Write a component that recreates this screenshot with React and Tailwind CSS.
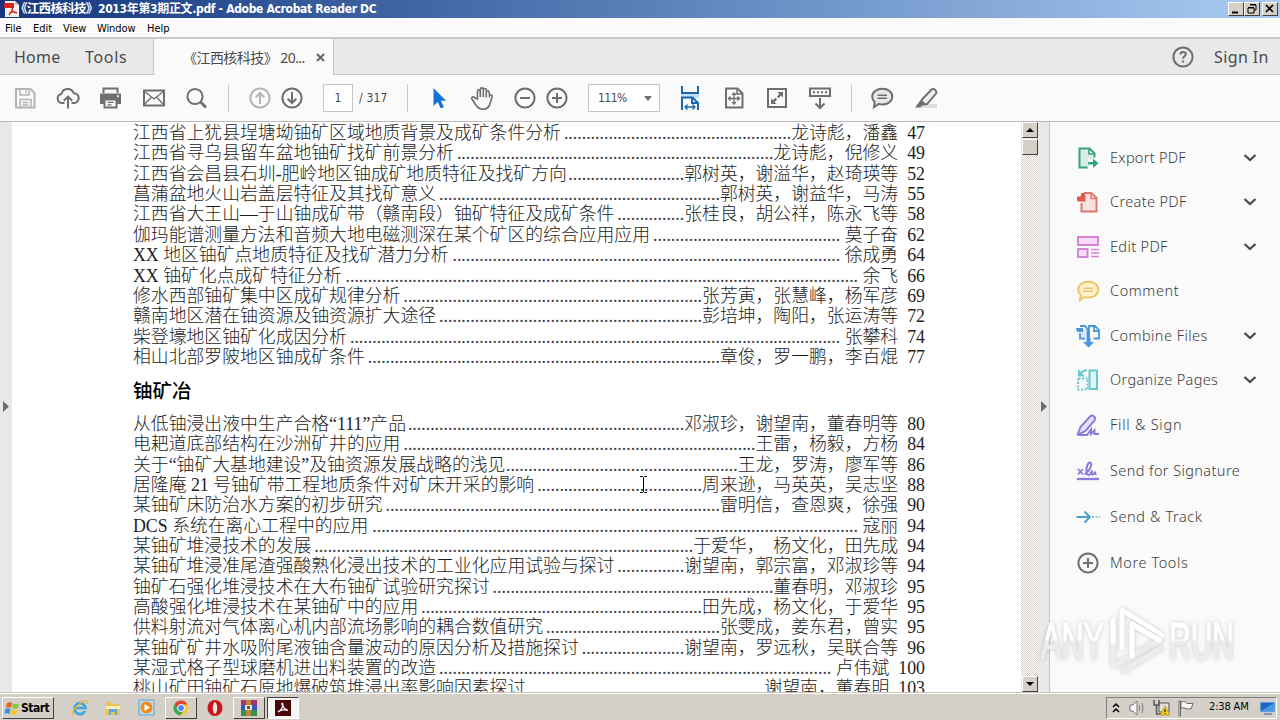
import React from "react";

const oreGeology = [
  ["江西省上犹县埕塘坳铀矿区域地质背景及成矿条件分析", 51, "龙诗彪，潘鑫", 47],
  ["江西省寻乌县留车盆地铀矿找矿前景分析", 71, "龙诗彪，倪修义", 49],
  ["江西省会昌县石圳-肥岭地区铀成矿地质特征及找矿方向", 26, "郭树英，谢溢华，赵琦瑛等", 52],
  ["菖蒲盆地火山岩盖层特征及其找矿意义", 63, "郭树英，谢益华，马涛", 55],
  ["江西省大王山—于山铀成矿带（赣南段）铀矿特征及成矿条件", 15, "张桂良，胡公祥，陈永飞等", 58],
  ["伽玛能谱测量方法和音频大地电磁测深在某个矿区的综合应用应用", 42, " 莫子奋", 62],
  ["XX 地区铀矿点地质特征及找矿潜力分析", 87, " 徐成勇", 64],
  ["XX 铀矿化点成矿特征分析", 115, " 余飞", 66],
  ["修水西部铀矿集中区成矿规律分析", 67, "张芳寅，张慧峰，杨军彦", 69],
  ["赣南地区潜在铀资源及铀资源扩大途径", 59, "彭培坤，陶阳，张运涛等", 72],
  ["柴登壕地区铀矿化成因分析", 110, " 张攀科", 74],
  ["相山北部罗陂地区铀成矿条件", 79, "章俊，罗一鹏，李百焜", 77],
];

const oreMetallurgy = [
  ["从低铀浸出液中生产合格“111”产品", 62, "邓淑珍，谢望南，董春明等", 80],
  ["电耙道底部结构在沙洲矿井的应用", 79, "王雷，杨毅，方杨", 84],
  ["关于“铀矿大基地建设”及铀资源发展战略的浅见", 52, "王龙，罗涛，廖军等", 86],
  ["居隆庵 21 号铀矿带工程地质条件对矿床开采的影响", 37, "周来逊，马英英，吴志坚", 88],
  ["某铀矿床防治水方案的初步研究", 75, "雷明信，查恩爽，徐强", 90],
  ["DCS 系统在离心工程中的应用", 109, " 寇丽", 94],
  ["某铀矿堆浸技术的发展", 85, "于爱华，  杨文化，田先成", 94],
  ["某铀矿堆浸准尾渣强酸熟化浸出技术的工业化应用试验与探讨", 15, "谢望南，郭宗富，邓淑珍等", 94],
  ["铀矿石强化堆浸技术在大布铀矿试验研究探讨", 63, "董春明，邓淑珍", 95],
  ["高酸强化堆浸技术在某铀矿中的应用", 63, "田先成，杨文化，于爱华", 95],
  ["供料射流对气体离心机内部流场影响的耦合数值研究", 39, "张雯成，姜东君，曾实", 95],
  ["某铀矿矿井水吸附尾液铀含量波动的原因分析及措施探讨", 23, "谢望南，罗远秋，吴联合等", 96],
  ["某湿式格子型球磨机进出料装置的改造", 88, " 卢伟斌", 100],
  ["桃山矿田铀矿石原地爆破筑堆浸出率影响因素探讨", 52, " 谢望南，董春明", 103],
];

function TocRow({ title, dots, authors, page }) {
  return (
    <div className="flex h-[20.36px] items-center whitespace-pre">
      <span>{title}</span>
      <span className="ml-auto text-[#3c3c44]">{".".repeat(dots)}</span>
      <span>{authors}</span>
      <span className="pl-[9px]">{page}</span>
    </div>
  );
}

function Toc({ rows }) {
  return rows.map(([title, dots, authors, page]) => (
    <TocRow key={title} title={title} dots={dots} authors={authors} page={page} />
  ));
}

function Svg({ size = 24, className = "", children, ...rest }) {
  return (
    <svg
      width={size}
      height={size}
      viewBox="0 0 24 24"
      fill="none"
      stroke="currentColor"
      strokeWidth="2"
      className={"shrink-0 " + className}
      {...rest}
    >
      {children}
    </svg>
  );
}

/* Toolbar icons */
const SaveIcon = () => (
  <Svg className="text-[#b4b4b4]">
    <path d="M3 3h14.500l4 4v14.500H3z" />
    <path d="M7 3v6h9V3M13 4.500v3M7 21v-7.500h11V21M9.500 16.500h6M9.500 19h6" strokeWidth="1.500" />
  </Svg>
);
const CloudIcon = () => (
  <Svg className="text-[#6e6e6e]">
    <path d="M8.500 17H6a4.600 4.600 0 0 1-.6-9.100A6.400 6.400 0 0 1 17.700 7.200 4.900 4.900 0 0 1 18 17h-2.500" />
    <path d="M12 22.500V11M7.800 14.800 12 10.600l4.200 4.200" />
  </Svg>
);
const PrintIcon = () => (
  <Svg className="text-[#6e6e6e]">
    <path d="M4.500 7V2.500h14V7" />
    <path d="M1 7.500h21V18H1z" fill="currentColor" stroke="none" />
    <path d="M5.500 13.500h12V21.500h-12z" fill="#fafafa" />
    <path d="M8.500 16.300h6M8.500 18.900h4" strokeWidth="1.300" />
    <path d="M18 10.300h1.700" stroke="#fafafa" />
  </Svg>
);
const MailIcon = () => (
  <Svg className="text-[#6e6e6e]">
    <path d="M2 4.500h20v15H2z" />
    <path d="m2 5 10 8 10-8M2 19l7.500-8M22 19l-7.500-8" strokeWidth="1.300" />
  </Svg>
);
const SearchIcon = () => (
  <Svg className="text-[#6e6e6e]">
    <circle cx="10" cy="10.500" r="7.600" />
    <path d="m15.500 16 5.500 5.500" strokeWidth="2.800" />
  </Svg>
);
const ArrowCircle = ({ down, className }) => (
  <Svg className={className}>
    <circle cx="12" cy="12" r="9.600" />
    {down ? <path d="M12 6v11M7.700 12.700 12 17l4.300-4.300" /> : <path d="M12 18V7M7.700 11.300 12 7l4.300 4.300" />}
  </Svg>
);
const PointerIcon = () => (
  <Svg>
    <path d="M6.500 2v18l4.200-4 3.200 6.500 3-1.500-3-6.200h5.200z" fill="#1473d8" stroke="none" />
  </Svg>
);
const HandIcon = () => (
  <Svg className="text-[#6e6e6e]" strokeWidth="1.600">
    <path d="M7.500 13V5.400c0-2 2.800-2 2.800 0V11 3.400c0-2 3-2 3 0V11 4c0-2 3-2 3 0v7.500V6.200c0-1.900 2.800-1.900 2.800 0l.5 3.800c1-1.800 3-.9 2.600.8L20 17.500c-.8 3.500-3.200 5.700-7 5.700-3.500 0-5.600-1.700-7.200-4.200L1.900 13c-1-1.700 1.200-2.800 2.500-1.400z" />
  </Svg>
);
const ZoomCircle = ({ plus }) => (
  <Svg className="text-[#6e6e6e]">
    <circle cx="12" cy="12" r="9.600" />
    <path d={plus ? "M7 12h10M12 7v10" : "M7 12h10"} />
  </Svg>
);
const FitWidthIcon = () => (
  <Svg className="text-[#1d67b0]" viewBox="0 0 20 26" width={20} height={26}>
    <path d="M1 11h18" stroke="#bfe0fb" strokeWidth="4" />
    <path d="M2 1v7h16V1" />
    <path d="M2 25V12.500h10.500L18 18v7M12 12.500V18h6" />
    <path d="M5 22h10M7.500 19.500 5 22l2.500 2.500M12.500 19.500 15 22l-2.500 2.500" strokeWidth="1.400" />
  </Svg>
);
const FitPageIcon = () => (
  <Svg className="text-[#6e6e6e]">
    <path d="M4 2.500h11.500l5 5v14H4z" />
    <path d="M15 3v5h5" strokeWidth="1.500" />
    <path d="M12 7v11M6.500 12.500h11M10 9l2-2 2 2M10 16l2 2 2-2M8.500 10.500l-2 2 2 2M15.500 10.500l2 2-2 2" strokeWidth="1.300" />
  </Svg>
);
const FullScreenIcon = () => (
  <Svg className="text-[#6e6e6e]">
    <path d="M3 3h18v18H3z" />
    <path d="M12.500 6H18v5.500zM6 12.500V18h5.500z" fill="currentColor" stroke="none" />
    <path d="m12.700 11.300 3.300-3.300M8 16l3.300-3.300" strokeWidth="2.400" />
  </Svg>
);
const ToolbarDownIcon = () => (
  <Svg className="text-[#6e6e6e]">
    <path d="M2 2.500h20V10H2z" />
    <path d="M5 6.300h14" strokeDasharray="2 2" />
    <path d="M12 12v10M7.500 17.500 12 22l4.500-4.500" />
  </Svg>
);
const BubbleIcon = ({ className, fill }) => (
  <Svg className={className} strokeWidth="2">
    <path d="M12.500 2.800c5.600 0 9.800 3.400 9.800 7.800s-4.200 7.900-9.800 7.900c-1.400 0-2.500-.2-3.700-.6L4 21.200l.8-5C3 14.700 2.200 13 2.200 10.600c0-4.400 4.600-7.800 10.300-7.800z" fill={fill} />
    <path d="M7.500 9.200h9.500M7.500 12.200h9.500" strokeWidth="1.400" />
  </Svg>
);
const HighlightIcon = () => (
  <Svg className="text-[#6e6e6e]">
    <path d="M9 18h14v4H6z" fill="#dcdcdc" stroke="none" />
    <path d="M17.500 3.500 8 13.500l-.5 3.500 2 1.500 3.500-.5L22 7.500c1.300-2.600-2-5.800-4.500-4z" strokeWidth="1.900" fill="#eee" />
    <path d="m7 13.500 5 4.500L7.500 20l-1 1.500H1z" fill="currentColor" stroke="none" />
  </Svg>
);
const Chevron = () => (
  <svg width="14" height="10" viewBox="0 0 14 10" fill="none" stroke="#4b4b4b" strokeWidth="2.300" className="ml-auto">
    <path d="m1.500 2 5.500 5 5.500-5" />
  </svg>
);

/* Tool pane icons */
const ExportIcon = () => (
  <Svg className="text-[#35a37e]">
    <path d="M4 3.500h8.500V9H18v4h-5.500v8H4z" fill="#d9ede6" stroke="none" />
    <path d="M11.500 21.500H3.500v-19h10l5 5V11.500" />
    <path d="M13 2.500V8h5" strokeWidth="1.600" />
    <path d="M12 16v2.500h5V22l5.500-4.800-5.500-4.800V16z" fill="currentColor" stroke="none" />
  </Svg>
);
const CreateIcon = () => (
  <Svg className="text-[#e0776c]">
    <path d="M5.500 13v8.500h15V8l-5-5H8" fill="#fbe3e0" />
    <path d="M15 3v5.500h5.500" strokeWidth="1.500" />
    <path d="M1 6.500h3.500L5.500 3H9v2.500h.5v6H3C2 11.500 1 11 1 10z" fill="#e25a4c" stroke="none" />
  </Svg>
);
const EditIcon = () => (
  <Svg className="text-[#d884d4]">
    <path d="M2 2h20v8H2zM2 14h9.500v8H2z" fill="#f7dcf7" />
    <path d="M15 14.500h8M15 18h8M15 21.500h8" strokeWidth="1.300" />
  </Svg>
);
const CombineIcon = () => (
  <Svg className="text-[#4a97dc]">
    <path d="M4 9v5.500h5M4 2h5l2.500 3v9M13 14V2h6l4 4v8.500h-5.500M18 2v5h5" strokeWidth="1.800" />
    <path d="M5 5h5v8H5z" fill="#d5e9fb" stroke="none" />
    <path d="M0 4h7v4H1z" fill="currentColor" stroke="none" />
    <path d="M10.500 14h4v4h3.500l-5.500 5.500L7 18h3.500z" fill="currentColor" stroke="none" />
  </Svg>
);
const OrganizeIcon = () => (
  <Svg className="text-[#67c8cf]">
    <path d="M13.500 2.500h7.500v18.500h-7.500z" fill="#dcf5f6" />
    <path d="M2 10.500v11h9.500v-11H2" strokeDasharray="2 1.500" />
    <path d="M2 1v7.500h7z" fill="currentColor" stroke="none" />
    <path d="M4.500 5.500C6 3 8 2.300 11 2.300" />
  </Svg>
);
const FillSignIcon = () => (
  <Svg className="text-[#8a7bdc]">
    <path d="M1.500 22 4.500 14 14 3.500c2.500-2.500 6.500.7 4.500 3.800L9.500 18l-8 4" fill="#e6e2fb" />
    <path d="M1.500 22H11l4-5.500V21l3.500-3.500V21h4.500" />
  </Svg>
);
const SignatureIcon = () => (
  <Svg className="text-[#8a7bdc]">
    <path d="M1 20h22" strokeWidth="2.300" />
    <path d="m2 10 5 5.500M7 10l-5 5.500" strokeWidth="1.800" />
    <path d="M8.500 15.500c5.500-3.500 8.500-11 5.500-12s-5.500 12.500-1.500 12.500c2 0 3.500-4.500 3.500-4.500s-1 4 .5 4 2.500-3 2.500-3-.3 3 1.500 3" />
  </Svg>
);
const TrackIcon = () => (
  <Svg className="text-[#4f9fce]">
    <path d="M.5 12H13M8.500 6.500 14 12l-5.500 5.500" />
    <path d="M16 12h8" stroke="#8bbbd9" strokeDasharray="2 1.500" />
  </Svg>
);

const tools = [
  ["Export PDF", <ExportIcon />, true, "tracking-[0.280px]"],
  ["Create PDF", <CreateIcon />, true, "tracking-[0.350px]"],
  ["Edit PDF", <EditIcon />, true, "tracking-[0.350px]"],
  ["Comment", <BubbleIcon className="text-[#efc468]" fill="#fdf1cf" />, false, "tracking-[0.600px]"],
  ["Combine Files", <CombineIcon />, true, "tracking-[0.450px]"],
  ["Organize Pages", <OrganizeIcon />, true, "tracking-[0.340px]"],
  ["Fill & Sign", <FillSignIcon />, false, "tracking-[0.750px]"],
  ["Send for Signature", <SignatureIcon />, false, "tracking-[0.400px]"],
  ["Send & Track", <TrackIcon />, false, "tracking-[0.600px]"],
  ["More Tools", <span className="text-[#6e6e6e]"><ZoomCircle plus /></span>, false, "tracking-[0.600px]"],
];

function WinButton({ children, className = "" }) {
  return (
    <span className={"flex h-[14px] w-4 items-center justify-center border border-t-white border-l-white border-r-[#404040] border-b-[#404040] bg-[#d4d0c8] " + className}>
      <svg width="12" height="12" viewBox="0 0 12 12" fill="none" stroke="#000">{children}</svg>
    </span>
  );
}

function ScrollButton({ up }) {
  return (
    <div className="flex h-4 w-4 shrink-0 items-center justify-center border border-t-white border-l-white border-r-[#404040] border-b-[#404040] bg-[#d4d0c8]">
      <svg width="8" height="5" viewBox="0 0 8 5"><path d={up ? "M4 0 8 4H0z" : "M0 0h8L4 4z"} fill="#000" /></svg>
    </div>
  );
}

function AcrobatFile() {
  return (
    <svg width="16" height="16" viewBox="0 0 16 16">
      <path d="M1 0h10l4 4v12H1z" fill="#f5f1f0" />
      <path d="M0 2h10v5H0z" fill="#d9241c" />
      <path d="M11 0v4h4z" fill="#c9c2c0" />
      <path d="M5 14c2-2 3.500-5 3.500-7.500M8 9c1 2 3 3 5 3M5 12.500c2-1.500 5-2 8-1" stroke="#d9241c" fill="none" strokeWidth="1.200" />
    </svg>
  );
}

function TitleBar() {
  return (
    <div className="flex h-[18px] shrink-0 items-center bg-linear-to-r from-[#15367e] to-[#a9cdf3] pr-[2px] pl-1 text-white">
      <AcrobatFile />
      <span className="flex items-center whitespace-nowrap font-bold">
        <span className="-ml-[5px] w-[83px] text-[12.500px] tracking-[-0.700px]">《江西核科技》</span>
        <span className="text-[12px] tracking-[-0.330px]">2013年第3期正文.pdf - Adobe Acrobat Reader DC</span>
      </span>
      <div className="ml-auto flex">
        <WinButton><path d="M2 9.500h6" strokeWidth="2" /></WinButton>
        <WinButton><path d="M4 2h6v5H8M4 1.500h6M2 5h6v5H2zM2 4.500h6" /></WinButton>
        <WinButton className="ml-[2px]"><path d="m2 2 7 7M9 2 2 9" strokeWidth="1.700" /></WinButton>
      </div>
    </div>
  );
}

function MenuBar() {
  return (
    <div className="flex h-[19px] shrink-0 items-center bg-[#fbfafa] pt-[3px] pl-[5px] text-[11px] text-black">
      <span className="w-7">File</span>
      <span className="w-[30px]">Edit</span>
      <span className="w-[34px]">View</span>
      <span className="w-[50px] tracking-[-0.100px]">Window</span>
      <span>Help</span>
    </div>
  );
}

function TabBar() {
  return (
    <div className="flex h-[38px] shrink-0 border-t-2 border-[#c9c9c9] bg-[#e9e9e9] font-['Noto_Sans','Noto_Sans_CJK_SC',sans-serif] text-[#4a4a4a]">
      <div className="flex w-[154px] items-center border-r border-b border-[#c6c6c6] pl-[14px] text-base">
        <span className="w-[71px] tracking-[0.250px]">Home</span>
        <span className="tracking-[0.700px]">Tools</span>
      </div>
      <div className="flex w-[179px] items-center bg-[#fafafa] pl-[29px]">
        <span className="w-[133px] whitespace-nowrap text-[14px] tracking-[-0.550px]">《江西核科技》 20...</span>
        <svg width="9" height="9" viewBox="0 0 9 9" stroke="#666" strokeWidth="2"><path d="m1 1 7 7M8 1 1 8" /></svg>
      </div>
      <div className="flex flex-1 items-center border-b border-l border-[#c6c6c6]">
        <Svg className="ml-auto text-[#6e6e6e]">
          <circle cx="12" cy="12" r="9.600" />
          <path d="M9.300 9.600c0-3.600 5.500-3.200 5.500-.3 0 2-2.700 2-2.700 4.400M12.100 15.500v2" />
        </Svg>
        <span className="ml-[19px] w-[66px] whitespace-nowrap text-base tracking-[0.400px]">Sign In</span>
      </div>
    </div>
  );
}

function Toolbar() {
  return (
    <div className="flex h-[47px] shrink-0 items-center border-b border-[#b9b9b9] bg-[#fafafa] pl-[13px] text-[#4a4a4a]">
      <div className="flex gap-[19px]"><SaveIcon /><CloudIcon /><PrintIcon /><MailIcon /><SearchIcon /></div>
      <span className="ml-[19px] h-7 w-px bg-[#c9c9c9]" />
      <div className="ml-[19px] flex gap-2">
        <ArrowCircle className="text-[#b4b4b4]" />
        <ArrowCircle down className="text-[#6e6e6e]" />
      </div>
      <span className="ml-[19px] flex h-7 w-[30px] items-center justify-center border border-[#c4c4c4] bg-white text-[12px]">1</span>
      <span className="ml-[6px] w-12 text-[12px] tracking-[0.200px] whitespace-pre">/ 317</span>
      <span className="h-7 w-px bg-[#c9c9c9]" />
      <div className="ml-[19px] flex gap-[19px]"><PointerIcon /><HandIcon /></div>
      <div className="ml-[19px] flex gap-2"><ZoomCircle /><ZoomCircle plus /></div>
      <div className="ml-[19px] flex h-7 w-[72px] items-center border border-[#c4c4c4] bg-white pl-[9px] text-[12px] tracking-[-0.500px]">
        111%
        <svg width="8" height="5" viewBox="0 0 8 5" className="mr-[7px] ml-auto"><path d="M0 0h8L4 5z" fill="#6e6e6e" /></svg>
      </div>
      <div className="ml-5 flex items-center gap-[19px]">
        <FitWidthIcon />
        <span className="ml-[3px]"><FitPageIcon /></span>
        <FullScreenIcon />
        <ToolbarDownIcon />
      </div>
      <span className="ml-[19px] h-7 w-px bg-[#c9c9c9]" />
      <div className="ml-[18px] flex gap-5">
        <BubbleIcon className="text-[#6e6e6e]" fill="#e8e8e8" />
        <HighlightIcon />
      </div>
    </div>
  );
}

function Watermark() {
  return (
    <svg width="200" height="76" viewBox="0 0 200 76" className="absolute right-[40px] bottom-[14px] drop-shadow-[0_0_2px_#00000030]">
      <defs>
        <linearGradient id="shade" gradientUnits="userSpaceOnUse" x1="0" y1="20" x2="0" y2="58">
          <stop offset="0.480" stopColor="#ffffff" />
          <stop offset="0.500" stopColor="#ececec" />
        </linearGradient>
      </defs>
      <g fill="url(#shade)" stroke="url(#shade)" strokeWidth="1.200" fontFamily="Liberation Sans Narrow, Liberation Sans, sans-serif" fontSize="51" fontWeight="400">
        <text x="1" y="57" textLength="63" lengthAdjust="spacingAndGlyphs">ANY</text>
        <text x="129" y="57" textLength="65" lengthAdjust="spacingAndGlyphs">RUN</text>
      </g>
      <g fill="none" strokeWidth="5" strokeLinejoin="round" strokeLinecap="round">
        <path d="M75 63 121 38M83 69l38-23M92 54l20-12M73 40v22" stroke="#ececec" />
        <path d="M73 18v22M82 46V8l40 25M92 54V22l27 16" stroke="#fff" />
      </g>
    </svg>
  );
}

function Workspace() {
  return (
    <div className="flex min-h-0 flex-1">
      <div className="flex w-3 shrink-0 items-center bg-[#e9e9e9] pb-px pl-[3px]">
        <svg width="6" height="11" viewBox="0 0 6 11"><path d="M0 0 6 5.500 0 11z" fill="#6e6e6e" /></svg>
      </div>
      <div className="relative w-[1009px] shrink-0 overflow-hidden bg-white pr-[96px] pl-[121px] font-['Liberation_Serif','Noto_Sans_CJK_SC',serif] text-[17.830px] font-light text-[#1c1c24]">
        <div className="pt-[1.200px]"><Toc rows={oreGeology} /></div>
        <h2 className="flex h-[46.500px] items-center pb-[3px] font-['Noto_Sans_CJK_SC',sans-serif] text-[19.500px] font-medium text-black">铀矿冶</h2>
        <Toc rows={oreMetallurgy} />
        <svg width="9" height="17" viewBox="0 0 9 17" className="absolute top-[354px] left-[627px]" fill="none" stroke="#000">
          <path d="M1 .5h2.500l1 1 1-1H8M4.500 1.500v14M1 16.500h2.500l1-1 1 1H8" />
        </svg>
      </div>
      <div className="flex w-[17px] shrink-0 flex-col bg-[repeating-conic-gradient(#d4d0c8_0_25%,#ffffff_0_50%)] bg-[length:2px_2px] pl-px">
        <ScrollButton up />
        <div className="mt-px h-4 w-4 border border-t-white border-l-white border-r-[#404040] border-b-[#404040] bg-[#d4d0c8]" />
        <div className="flex-1" />
        <ScrollButton />
      </div>
      <div className="flex w-3 shrink-0 items-center border-r border-[#c4c4c4] bg-[#e9e9e9] pb-px pl-[3px]">
        <svg width="6" height="11" viewBox="0 0 6 11"><path d="M0 0 6 5.500 0 11z" fill="#6e6e6e" /></svg>
      </div>
      <div className="relative flex-1 bg-[#fafafa] pt-[13.300px] pr-[23px] pl-[26px] font-['Noto_Sans',sans-serif] text-[14.500px] font-light text-[#3c3c3c]">
        {tools.map(([name, icon, expandable, tracking], i) => (
          <div key={name} className={"flex items-center " + (i < 6 ? "h-[44.500px]" : "h-[46px]")}>
            {icon}
            <span className={"ml-[10px] whitespace-nowrap " + tracking}>{name}</span>
            {expandable && <Chevron />}
          </div>
        ))}
        <Watermark />
      </div>
    </div>
  );
}

function TaskButton({ pressed, children }) {
  return (
    <span className={"flex h-[22px] w-8 items-center justify-center border " + (pressed ? "border-t-[#404040] border-l-[#404040] border-r-white border-b-white bg-[#f8f7f5]" : "border-t-white border-l-white border-r-[#404040] border-b-[#404040]")}>
      {children}
    </span>
  );
}

function Pic({ children, w = 18, h = 18 }) {
  return <svg width={w} height={h} viewBox={`0 0 ${w} ${h}`} className="shrink-0">{children}</svg>;
}

function Taskbar() {
  return (
    <div className="flex h-7 shrink-0 items-center border-t border-[#c8c4bc] bg-[#d4d0c8] pt-[2px] pl-[2px] text-black shadow-[inset_0_1px_#ffffff]">
      <span className="flex h-[22px] w-[52px] items-center border border-t-white border-l-white border-r-[#404040] border-b-[#404040] pl-px text-[12px] font-bold">
        <Pic w={16} h={16}>
          <path d="M3 3c2-1 3.500-1 5 0L7 8C5 7 4 7 2 8z" fill="#e8622c" />
          <path d="M9 3.500c2 1 4 1 6 0L14 8c-2 1-4 1-6 0z" fill="#8cc63e" />
          <path d="M1.500 9c2-1 3.500-1 5 0l-1 5c-2-1-3.500-1-5 0z" fill="#3f8fdc" />
          <path d="M7.500 9.500c2 1 4 1 6 0L12.500 14c-2 1-4 1-6 0z" fill="#fcc624" />
        </Pic>
        <span className="ml-px tracking-[-0.500px]">Start</span>
      </span>
      <div className="ml-[17px] flex items-center">
        <Pic>
          <path d="M14 12a5.500 5.500 0 1 1 .5-3H5" fill="none" stroke="#3ba4e4" strokeWidth="2.700" />
          <path d="M2 16C-1 12 12 0 16 2c1.500 1 0 3 0 3" fill="none" stroke="#e9b92e" strokeWidth="1.300" />
        </Pic>
        <span className="ml-[15px]"><Pic>
          <path d="M2 3h5l1 2h8v11H2z" fill="#e8c45c" />
          <path d="M2 7h14v3H2z" fill="#fbf0b6" />
          <path d="M5 10h8v6h-2v-3H7v3H5z" fill="#5aa8dc" />
        </Pic></span>
        <span className="ml-4"><Pic>
          <path d="M1 1h15v15H1z" fill="#b9dcf3" stroke="#5aa5d6" />
          <circle cx="8.500" cy="8.500" r="6" fill="#f38b1c" />
          <path d="M6.500 5v7l5.500-3.500z" fill="#fff" />
        </Pic></span>
      </div>
      <div className="ml-[9px] flex items-center">
        <TaskButton>
          <Pic w={16} h={16}>
            <circle cx="8" cy="8" r="7.500" fill="#f9c92f" />
            <path d="M1.500 4.200A7.500 7.500 0 0 1 14.500 4.500H8L5 9.500z" fill="#e04434" />
            <path d="M1.500 4.200A7.500 7.500 0 0 0 7.500 15.500L11 10 5 10z" fill="#3aa655" />
            <circle cx="8" cy="8" r="3.500" fill="#4688f1" stroke="#fff" />
          </Pic>
        </TaskButton>
        <span className="mx-[9px]"><Pic><ellipse cx="9" cy="9" rx="7.500" ry="8" fill="#c4161c" /><ellipse cx="9" cy="9" rx="2.200" ry="5.800" fill="#f0e7e4" /></Pic></span>
        <TaskButton>
          <Pic>
            <path d="M1 1h16v5H1z" fill="#a3346f" /><path d="M1 6h16v5H1z" fill="#3353bd" /><path d="M1 11h16v6H1z" fill="#31924a" />
            <path d="M6 1h5v16H6z" fill="#c08540" /><path d="M5 6h7v5H5z" fill="#efe5c0" /><path d="M7 7h3v3H7z" fill="#745521" />
          </Pic>
        </TaskButton>
        <span className="ml-[2px]"><TaskButton pressed>
          <Pic w={16} h={16}>
            <path d="M0 0h16v16H0z" fill="#470707" />
            <path d="M3 12c3-1 6-7 4.500-8.500S7 8 13 10.500C10 9 5 10 3 12z" fill="none" stroke="#fff" strokeWidth="1.300" />
          </Pic>
        </TaskButton></span>
      </div>
      <div className="mr-[3px] ml-auto flex h-[22px] w-[171px] items-center border border-t-[#808080] border-l-[#808080] border-r-white border-b-white pl-[5px] text-[11px]">
        <Pic w={8} h={12}><path d="m1 5 3-3 3 3M1 10l3-3 3 3" fill="none" stroke="#000" strokeWidth="1.500" /></Pic>
        <span className="ml-[9px]"><Pic>
          <path d="M1 6h3l4-4v14l-4-4H1z" fill="#f7f7f7" stroke="#777" />
          <path d="M10 6c1 2 1 4 0 6M12.500 4c2 3 2 7 0 10" fill="none" stroke="#777" />
        </Pic></span>
        <span className="ml-[6px]"><Pic>
          <path d="M6 4h10v9H6z" fill="#ddd" stroke="#555" />
          <path d="M1 1v5h5V1M3.500 6v9H8" fill="none" stroke="#555" strokeWidth="1.500" />
          <path d="m12 7 5 9H7z" fill="#f7cf25" stroke="#a98407" strokeWidth=".6" /><path d="M12 10v3M12 14v1" stroke="#000" />
        </Pic></span>
        <span className="ml-[6px]"><Pic><path d="M2 17V2h1.500v15zM4 3c4-2 5 2 8 1.500h4L14 10c-4 1-6-2-10-1z" fill="#fbfbfb" stroke="#666" /></Pic></span>
        <span className="ml-[14px] w-[50px] tracking-[-0.150px] whitespace-nowrap">2:38 AM</span>
        <Pic w={18} h={16}><path d="M2 2h15v10H2z" fill="#1c66c5" stroke="#b2cfe8" /><path d="M3 11 16 3v8z" fill="#4a97e3" /><path d="M6 14h8" stroke="#3a5b80" /></Pic>
      </div>
    </div>
  );
}

export default function App() {
  return (
    <div className="flex h-[720px] w-[1280px] flex-col overflow-hidden bg-[#fafafa] font-['DejaVu_Sans_Condensed','Noto_Sans_CJK_SC',sans-serif]">
      <TitleBar />
      <MenuBar />
      <TabBar />
      <Toolbar />
      <Workspace />
      <Taskbar />
    </div>
  );
}
